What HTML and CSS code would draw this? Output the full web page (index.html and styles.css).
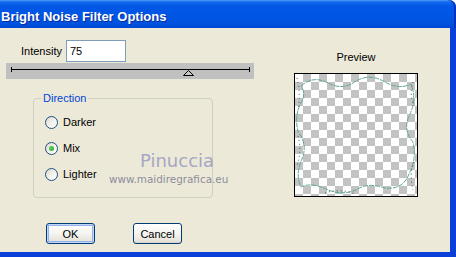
FILE: index.html
```html
<!DOCTYPE html>
<html lang="en">
<head>
    <meta charset="UTF-8">
    <title>Bright Noise Filter Options</title>
    <link rel="stylesheet" href="styles.css">
</head>
<body>

<div class="window">
    <div class="titlebar">Bright Noise Filter Options</div>
    <div class="client">
        <div class="left">
            <div class="intensity">
                <label for="intensity">Intensity</label>
                <input type="text" id="intensity" value="75">
            </div>

            <svg class="slider" width="248" height="16" viewBox="0 0 248 16">
                <line x1="5" y1="6.5" x2="244" y2="6.5" stroke="#000" stroke-width="1"/>
                <line x1="5.5" y1="4" x2="5.5" y2="9" stroke="#000" stroke-width="1"/>
                <line x1="243.5" y1="4" x2="243.5" y2="9" stroke="#000" stroke-width="1"/>
                <polygon points="182.5,7.5 177.5,12.5 187.5,12.5" fill="#c8c8c8" stroke="#000" stroke-width="1"/>
            </svg>

            <fieldset class="direction">
                <legend>Direction</legend>
                <label class="radio"><span class="dot"></span>Darker</label>
                <label class="radio checked"><span class="dot"></span>Mix</label>
                <label class="radio"><span class="dot"></span>Lighter</label>
            </fieldset>

            <div class="buttons">
                <button type="button" class="btn default">OK</button>
                <button type="button" class="btn">Cancel</button>
            </div>
        </div>

        <div class="preview">
            <div class="preview-label">Preview</div>
            <div class="preview-box">
                <svg width="122" height="122" viewBox="0 0 122 122">
                    <!-- wavy edge of the noise frame -->
                    <path d="M6 12 Q18 1 33 9 Q48 17 61 7 Q75 -1 90 8 Q104 16 116 10 Q122 25 115 40 Q107 55 118 68 Q122 85 114 100 Q108 116 90 114 Q72 108 61 116 Q46 122 31 115 Q16 108 6 113 Q0 100 7 85 Q13 70 3 58 Q-1 40 7 27 Q11 19 6 12 Z"
                          fill="none" stroke="#5fa898" stroke-width="1" stroke-dasharray="5 1"/>
                    <path d="M2 4 Q6 20 3 36 M3 62 Q7 76 2 92 M118 8 Q114 20 119 32 M119 88 Q114 100 118 116 M30 119 Q45 114 60 120"
                          fill="none" stroke="#3a4a48" stroke-width="1" stroke-dasharray="1 3"/>
                </svg>
            </div>
        </div>

        <div class="watermark">
            <span class="wm-name">Pinuccia</span>
            <span class="wm-site">www.maidiregrafica.eu</span>
        </div>
    </div>
</div>

</body>
</html>
```

FILE: styles.css
```css
body {
    margin: 0;
    font-family: "Liberation Sans", Arial, sans-serif;
    font-size: 11px;
    color: #000;
}
.window {
    width: 456px;
    height: 257px;
    display: flex;
    flex-direction: column;
    overflow: hidden;
}
.titlebar {
    height: 28px;
    box-sizing: border-box;
    padding: 6px 0 0 1px;
    line-height: 22px;
    font-size: 13px;
    font-weight: bold;
    color: #fff;
    text-shadow: 1px 1px 0 #0a2a9a;
    border-top-right-radius: 7px;
    background: linear-gradient(to bottom, #4d9cf8 0, #1469ec 2px, #0258e6 6px, #0055e4 60%, #0052de 85%, #0046d2 100%);
    box-shadow: inset -2px 0 0 #0033c4;
}
.client {
    flex: 1;
    position: relative;
    display: flex;
    background-color: #ece9d8;
    border-right: 6px solid #0a3fd8;
    border-bottom: 5px solid #0a3fd8;
}
.left {
    width: 262px;
    padding-top: 12px;
}
.intensity {
    display: flex;
    align-items: center;
    padding-left: 21px;
}
.intensity label {
    width: 45px;
}
.intensity input {
    width: 60px;
    height: 22px;
    box-sizing: border-box;
    margin: 0;
    padding: 0 3px;
    border: 1px solid #7f9db9;
    font-family: inherit;
    font-size: 11px;
    outline: none;
}
.slider {
    display: block;
    margin: 1px 0 0 6px;
    background-color: #c0c0c0;
}
.direction {
    width: 180px;
    box-sizing: border-box;
    margin: 13px 0 0 33px;
    padding: 4px 0 10px 11px;
    border: 1px solid #d0d0bf;
    border-radius: 4px;
    min-width: 0;
}
.direction legend {
    color: #0046d5;
    padding: 0 2px;
    margin-left: -4px;
    line-height: 13px;
}
.radio {
    display: flex;
    align-items: center;
    gap: 5px;
    height: 26px;
}
.dot {
    width: 13px;
    height: 13px;
    box-sizing: border-box;
    border: 1px solid #1c5180;
    border-radius: 50%;
    background: linear-gradient(135deg, #dcd9cf 0%, #f4f3ee 55%, #ffffff 100%);
    display: flex;
    align-items: center;
    justify-content: center;
}
.checked .dot::after {
    content: "";
    width: 5px;
    height: 5px;
    border-radius: 50%;
    background: radial-gradient(circle at 40% 40%, #5fd35f, #21a121);
}
.buttons {
    display: flex;
    gap: 38px;
    margin: 25px 0 0 46px;
}
.btn {
    width: 49px;
    height: 21px;
    box-sizing: border-box;
    padding: 0;
    border: 1px solid #003c74;
    border-radius: 3px;
    background: linear-gradient(to bottom, #ffffff 0%, #f4f4f0 50%, #e6e3da 90%, #d6d0c5 100%);
    font-family: inherit;
    font-size: 11px;
    color: #000;
}
.btn.default {
    box-shadow: inset 0 0 0 1px #c2d6f7, inset 0 0 0 2px #92b3ec;
}
.preview {
    width: 124px;
    margin-left: 32px;
    padding-top: 23px;
}
.preview-label {
    text-align: center;
    line-height: 13px;
    margin-bottom: 9px;
}
.preview-box {
    width: 124px;
    height: 124px;
    box-sizing: border-box;
    border: 1px solid #000;
    background-color: #fff;
    background-image: conic-gradient(#c3c3c3 25%, #fff 0 50%, #c3c3c3 0 75%, #fff 0);
    background-size: 16px 16px;
}
.preview-box svg {
    display: block;
}
.watermark {
    position: absolute;
    left: 0;
    top: 0;
    pointer-events: none;
}
.wm-name {
    position: absolute;
    left: 140px;
    top: 124px;
    font-family: "DejaVu Sans", sans-serif;
    font-size: 18px;
    line-height: 18px;
    color: #a7a6c5;
    white-space: nowrap;
}
.wm-site {
    position: absolute;
    left: 109px;
    top: 145px;
    font-family: "DejaVu Sans", sans-serif;
    font-size: 10.4px;
    line-height: 12px;
    color: #8d8c9e;
    white-space: nowrap;
}
```
